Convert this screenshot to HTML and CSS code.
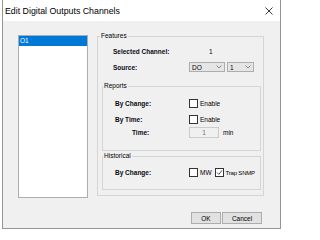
FILE: index.html
```html
<!DOCTYPE html>
<html>
<head>
<meta charset="utf-8">
<link rel="stylesheet" href="styles.css">
</head>
<body>
<div class="window">
  <div class="titlebar">
    <span class="title">Edit Digital Outputs Channels</span>
    <svg class="close" viewBox="0 0 8 8"><path d="M0.5 0.5 L7.5 7.5 M7.5 0.5 L0.5 7.5" stroke="#222" stroke-width="0.9" fill="none"/></svg>
  </div>
  <div class="main">
    <div class="listbox">
      <div class="item selected">O1</div>
    </div>
    <fieldset class="group features">
      <legend>Features</legend>
      <div class="row">
        <span class="label">Selected Channel:</span>
        <span class="value">1</span>
      </div>
      <div class="row row-source">
        <span class="label">Source:</span>
        <div class="select sel-do"><span>DO</span><svg class="chev" viewBox="0 0 6 4"><path d="M0.5 0.5 L3 3 L5.5 0.5" stroke="#707070" stroke-width="0.8" fill="none"/></svg></div>
        <div class="select sel-num"><span>1</span><svg class="chev" viewBox="0 0 6 4"><path d="M0.5 0.5 L3 3 L5.5 0.5" stroke="#707070" stroke-width="0.8" fill="none"/></svg></div>
      </div>
      <fieldset class="group sub reports">
        <legend>Reports</legend>
        <div class="row">
          <span class="label">By Change:</span>
          <span class="check"></span><span class="cb-label">Enable</span>
        </div>
        <div class="row row-bytime">
          <span class="label">By Time:</span>
          <span class="check"></span><span class="cb-label">Enable</span>
        </div>
        <div class="row row-time">
          <span class="label label-time">Time:</span>
          <span class="input">1</span><span class="unit">min</span>
        </div>
      </fieldset>
      <fieldset class="group sub historical">
        <legend>Historical</legend>
        <div class="row">
          <span class="label">By Change:</span>
          <span class="check"></span><span class="cb-label">MW</span>
          <span class="check checked trap"><svg viewBox="0 0 7 7"><path d="M1 3.6 L2.8 5.4 L6 1.4" stroke="#222" stroke-width="0.8" fill="none"/></svg></span><span class="cb-label cb-trap">Trap SNMP</span>
        </div>
      </fieldset>
    </fieldset>
  </div>
  <div class="footer">
    <button class="btn btn-ok">OK</button>
    <button class="btn btn-cancel">Cancel</button>
  </div>
</div>
</body>
</html>
```

FILE: styles.css
```css
html, body {
  margin: 0;
  background: #ffffff;
}
body {
  font-family: "Liberation Sans", Arial, sans-serif;
  font-size: 6.5px;
  color: #000;
}
.window {
  margin-left: 2px;
  width: 279px;
  height: 229px;
  box-sizing: border-box;
  border: 1px solid #959595;
  border-top: none;
  background: #f0f0f0;
  display: flex;
  flex-direction: column;
}
.titlebar {
  flex: none;
  height: 21px;
  box-sizing: border-box;
  background: #ffffff;
  display: flex;
  align-items: center;
  justify-content: space-between;
  padding: 1px 7px 0 2px;
}
.title {
  font-size: 8.8px;
  line-height: 10px;
  color: #000;
}
.close {
  width: 8px;
  height: 8px;
  display: block;
}
.main {
  display: flex;
  align-items: flex-start;
  padding: 11px 0 0 15px;
}
.listbox {
  flex: none;
  width: 70px;
  height: 163px;
  margin-top: 3px;
  box-sizing: border-box;
  border: 1px solid #acacac;
  background: #ffffff;
}
.item {
  height: 10px;
  line-height: 10px;
  padding-left: 1px;
}
.item.selected {
  background: #0078d7;
  color: #ffffff;
}
.group {
  margin: 0;
  padding: 0;
  border: 1px solid #d5d5d5;
  min-inline-size: 0;
  box-sizing: border-box;
}
.group > legend {
  padding: 0 1px;
  font-size: 6.5px;
  line-height: 8px;
  color: #000;
}
.features {
  flex: none;
  width: 167px;
  margin-left: 9px;
  padding: 6px 0 5px 0;
}
.features > legend {
  margin-left: 2px;
}
.sub {
  margin: 0 2px 0 4px;
}
.row {
  display: flex;
  align-items: center;
  white-space: nowrap;
}
.row > * {
  flex-shrink: 0;
}
.features > .row {
  height: 10px;
  padding-left: 15px;
}
.label {
  flex: none;
  width: 76px;
  font-weight: bold;
  color: #0a0a14;
}
.sub .row {
  height: 11px;
  padding-left: 12px;
}
.sub .label {
  width: 74px;
}
.label-time {
  box-sizing: border-box;
  padding-left: 17px;
}
.value {
  margin-left: 20px;
}
.row-source {
  margin-top: 6px;
}
.select {
  height: 10px;
  box-sizing: border-box;
  border: 1px solid #adadad;
  background: #e5e5e5;
  display: flex;
  align-items: center;
  justify-content: space-between;
  padding: 0 2px 0 2px;
}
.sel-do {
  width: 36px;
}
.sel-num {
  width: 27px;
  margin-left: 2px;
}
.chev {
  width: 6px;
  height: 4px;
  display: block;
}
.reports {
  margin-top: 10px;
  padding: 8px 0 12px 0;
}
.row-bytime {
  margin-top: 5px;
}
.row-time {
  margin-top: 2px;
}
.historical {
  margin-top: 1px;
  padding: 7px 0 11px 0;
}
.check {
  flex: none;
  width: 9px;
  height: 9px;
  box-sizing: border-box;
  border: 1px solid #333333;
  background: #ffffff;
  display: flex;
  align-items: center;
  justify-content: center;
}
.check svg {
  width: 7px;
  height: 7px;
  display: block;
}
.trap {
  margin-left: 3px;
}
.cb-label {
  margin-left: 2px;
}
.cb-trap {
  font-size: 6px;
  letter-spacing: -0.2px;
}
.input {
  width: 30px;
  height: 11px;
  box-sizing: border-box;
  border: 1px solid #cccccc;
  background: #f0f0f0;
  color: #6d6d6d;
  text-align: center;
  line-height: 9px;
}
.unit {
  margin-left: 4px;
}
.footer {
  display: flex;
  justify-content: flex-end;
  gap: 1px;
  padding: 14px 18px 0 0;
}
.btn {
  height: 12px;
  box-sizing: border-box;
  border: 1px solid #adadad;
  background: #e1e1e1;
  font-family: "Liberation Sans", Arial, sans-serif;
  font-size: 6.5px;
  color: #000;
  padding: 0;
  margin: 0;
}
.btn-ok {
  width: 30px;
}
.btn-cancel {
  width: 40px;
}
```
